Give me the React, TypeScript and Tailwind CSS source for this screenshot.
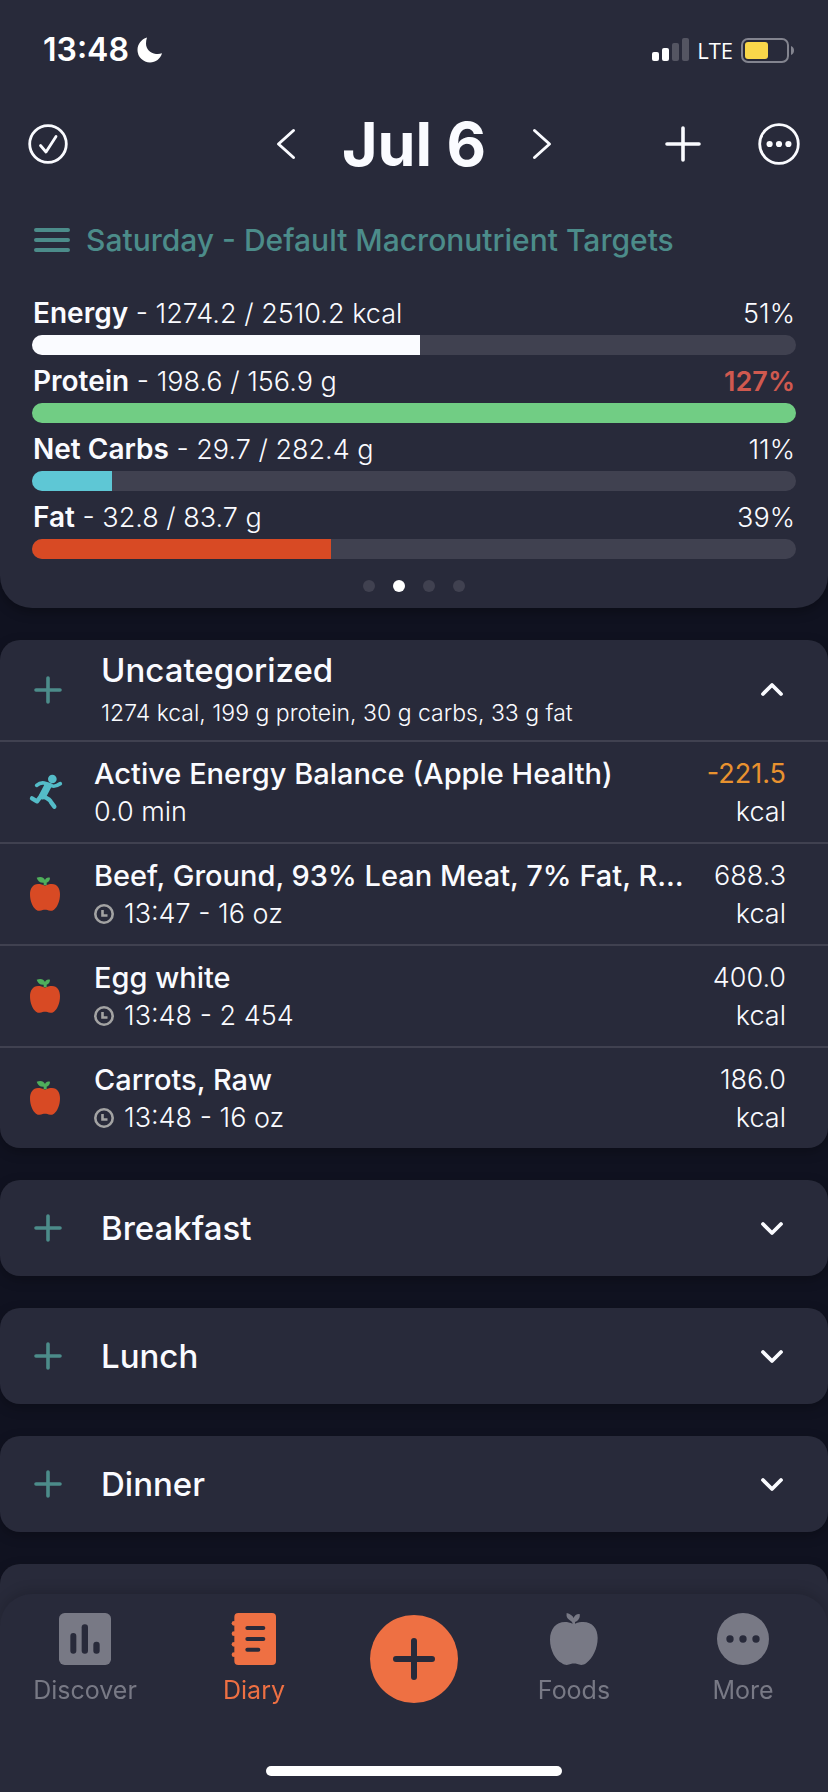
import React from "react";

type Macro = {
  name: string;
  consumed: number;
  target: number;
  unit: string;
  fill: string;
};

type Entry = {
  title: string;
  detail: string;
  value: string;
  kind: "exercise" | "food";
};

const macros: Macro[] = [
  { name: "Energy", consumed: 1274.2, target: 2510.2, unit: "kcal", fill: "bg-[#fafbff]" },
  { name: "Protein", consumed: 198.6, target: 156.9, unit: "g", fill: "bg-[#71cd84]" },
  { name: "Net Carbs", consumed: 29.7, target: 282.4, unit: "g", fill: "bg-[#5ec7d5]" },
  { name: "Fat", consumed: 32.8, target: 83.7, unit: "g", fill: "bg-[#d84a24]" },
];

const entries: Entry[] = [
  { title: "Active Energy Balance (Apple Health)", detail: "0.0 min", value: "-221.5", kind: "exercise" },
  { title: "Beef, Ground, 93% Lean Meat, 7% Fat, R…", detail: "13:47 - 16 oz", value: "688.3", kind: "food" },
  { title: "Egg white", detail: "13:48 - 2 454", value: "400.0", kind: "food" },
  { title: "Carrots, Raw", detail: "13:48 - 16 oz", value: "186.0", kind: "food" },
];

function StatusBar() {
  return (
    <div className="flex h-[100px] items-center justify-between pr-[34px] pl-[43px]">
      <div className="flex items-center gap-2">
        <span className="text-[32px] leading-none font-semibold text-white">13:48</span>
        <svg width="26" height="26" viewBox="0 0 26 26" fill="#fff" aria-hidden="true">
          <path d="M10 .5C4.300 2.200.5 7.200.5 13A12.500 12.500 0 0 0 13 25.500c5.600 0 10.500-3.600 12-9.200-2 .7-4 .9-6 .6C13 16.200 9 12 9 6.500c0-2.100.3-4.100 1-6z" />
        </svg>
      </div>
      <div className="flex items-center gap-2">
        <svg width="37" height="24" viewBox="0 0 37 24" aria-hidden="true">
          <rect x="0" y="14" width="7" height="9" rx="2" fill="#fff" />
          <rect x="10" y="10" width="7" height="13" rx="2" fill="#fff" />
          <rect x="20" y="5" width="7" height="18" rx="2" fill="#545562" />
          <rect x="30" y="0" width="7" height="23" rx="2" fill="#545562" />
        </svg>
        <span className="font-['Open_Sans',sans-serif] text-[22px] leading-none font-medium text-white">LTE</span>
        <svg width="53" height="25" viewBox="0 0 53 25" aria-hidden="true">
          <rect x="1" y="1" width="46" height="23" rx="6" fill="none" stroke="#83848f" strokeWidth="2" />
          <rect x="4" y="4" width="23" height="17" rx="3" fill="#f9d74a" />
          <path d="M50 8c2 .8 3 2.500 3 4.500S52 16.200 50 17z" fill="#83848f" />
        </svg>
      </div>
    </div>
  );
}

function PlusIcon() {
  return (
    <svg width="28" height="28" viewBox="0 0 28 28" stroke="#4c8c8a" strokeWidth="3.600" strokeLinecap="round" aria-hidden="true">
      <path d="M14 2v24M2 14h24" />
    </svg>
  );
}

function Caret({ up = false }: { up?: boolean }) {
  return (
    <svg width="24" height="16" viewBox="0 0 24 16" fill="none" stroke="#fafbff" strokeWidth="3.800" strokeLinecap="round" strokeLinejoin="round" aria-hidden="true">
      <path d={up ? "M3 12l9-9 9 9" : "M3 4l9 9 9-9"} />
    </svg>
  );
}

function RunnerIcon() {
  return (
    <svg width="34" height="36" viewBox="84 462 102 108" fill="none" stroke="#54bcc8" strokeLinecap="round" strokeLinejoin="round" aria-hidden="true">
      <circle cx="154" cy="477" r="13" fill="#54bcc8" stroke="none" />
      <path d="M107 496c7-6 14-8 22-7l20 6c6 6 15 5 29-4" strokeWidth="11" />
      <path d="M140 499l-15 28" strokeWidth="22" />
      <path d="M121 527l-13 17-15-9" strokeWidth="13" />
      <path d="M128 530c14 5 20 10 23 18l9 12" strokeWidth="13" />
    </svg>
  );
}

function AppleIcon() {
  return (
    <svg width="32" height="36" viewBox="87 768 96 108" aria-hidden="true">
      <path
        d="M135 797c7-3 13-5 21-5 16 0 24 13 24 31 0 20-8 39-18 46-7 5-15 4-20 1-5-1-9-1-14 0-5 3-13 4-20-1-10-7-18-26-18-46 0-18 9-31 24-31 8 0 14 2 21 5z"
        fill="#d84a24"
      />
      <path
        d="M131 796v-8c-10 1-18-5-21-15 12-4 21-2 25 7 2-7 8-9 15-7 0 8-4 13-10 15v8z"
        fill="#4fae5b"
      />
    </svg>
  );
}

function ClockIcon() {
  return (
    <svg width="20" height="20" viewBox="0 0 20 20" fill="none" stroke="#a3a3a3" aria-hidden="true">
      <circle cx="10" cy="10" r="8.700" strokeWidth="2.600" />
      <path d="M8.500 6v5.500H13.500" strokeWidth="2.600" />
    </svg>
  );
}

function MacroRow({ macro }: { macro: Macro }) {
  const share = (macro.consumed / macro.target) * 100;
  const over = share > 100;
  return (
    <div className="pt-[6px]">
      <div className="flex h-[42px] justify-between px-px text-[27px] leading-[42px] font-light">
        <span>
          <strong className="text-[28px] leading-none font-semibold">{macro.name}</strong> - {macro.consumed} / {macro.target} {macro.unit}
        </span>
        <span className={over ? "font-semibold text-[#d0594f]" : ""}>{Math.round(share)}%</span>
      </div>
      <div className="h-5 overflow-hidden rounded-full bg-[#404150]">
        <div className={`h-full ${macro.fill}`} style={{ width: `${Math.min(share, 100)}%` }} />
      </div>
    </div>
  );
}

function EntryRow({ entry }: { entry: Entry }) {
  const exercise = entry.kind === "exercise";
  return (
    <li className="flex items-center border-t-2 border-[#404150] pr-[42px] text-[27px] leading-[38px] font-light">
      <div className="flex w-[94px] shrink-0 pl-[29px]">{exercise ? <RunnerIcon /> : <AppleIcon />}</div>
      <div className="min-w-0 flex-1 pt-[13px] pb-[11px]">
        <div className="truncate text-[29px] font-medium">{entry.title}</div>
        <div className="flex items-center gap-[10px]">
          {!exercise && <ClockIcon />}
          <span>{entry.detail}</span>
        </div>
      </div>
      <div className="ml-4 min-w-[80px] shrink-0 pt-[13px] pb-[11px] text-right">
        <div className={exercise ? "font-normal text-[#e8922f]" : ""}>{entry.value}</div>
        <div>kcal</div>
      </div>
    </li>
  );
}

function MealCard({ name }: { name: string }) {
  return (
    <section className="flex h-24 items-center rounded-[20px] bg-[#282a3a] pr-11 pl-[34px] shadow-[0_4px_12px_rgba(0,0,0,0.25)]">
      <button type="button" aria-label={`Add to ${name}`}>
        <PlusIcon />
      </button>
      <h2 className="flex-1 pl-[39px] text-[33px] leading-10 font-medium">{name}</h2>
      <button type="button" aria-label={`Expand ${name}`}>
        <Caret />
      </button>
    </section>
  );
}

function NavItem({ label, active = false, children }: { label: string; active?: boolean; children: React.ReactNode }) {
  return (
    <a href="#" className={`flex flex-col items-center ${active ? "text-[#ee7043]" : "text-[#787985]"}`}>
      <svg width="54" height="54" viewBox="0 0 162 162" fill="currentColor" aria-hidden="true">
        {children}
      </svg>
      <span className="mt-2 text-[25px] leading-8">{label}</span>
    </a>
  );
}

function BottomNav() {
  return (
    <nav className="fixed inset-x-0 bottom-0 flex flex-col items-center rounded-t-[32px] bg-[#282a3a] pt-[18px] pb-4 shadow-[0_-4px_12px_rgba(0,0,0,0.15)]">
      <div className="grid w-full grid-cols-[170fr_168fr_152fr_168fr_170fr] items-center">
        <NavItem label="Discover">
          <rect x="3" y="3" width="156" height="156" rx="17" />
          <g fill="#282a3a">
            <rect x="37" y="63" width="18" height="62" rx="9" />
            <rect x="71" y="37" width="19" height="88" rx="9" />
            <rect x="106" y="89" width="19" height="36" rx="9" />
          </g>
        </NavItem>
        <NavItem label="Diary" active>
          <rect x="22" y="3" width="125" height="156" rx="12" />
          <circle cx="21" cy="34" r="7" />
          <circle cx="21" cy="65" r="7" />
          <circle cx="21" cy="97" r="7" />
          <circle cx="21" cy="128" r="7" />
          <g fill="#282a3a">
            <rect x="55" y="42" width="60" height="12" rx="6" />
            <rect x="55" y="75" width="60" height="12" rx="6" />
            <rect x="55" y="107" width="45" height="12" rx="6" />
          </g>
        </NavItem>
        <button type="button" aria-label="Add" className="grid size-[88px] place-items-center justify-self-center rounded-full bg-[#ee7043]">
          <svg width="42" height="42" viewBox="0 0 42 42" stroke="#282a3a" strokeWidth="6" strokeLinecap="round" aria-hidden="true">
            <path d="M21 3v36M3 21h36" />
          </svg>
        </button>
        <NavItem label="Foods">
          <path d="M77 35c-2-12-22-10-18-32 10 3 18 8 21 15 3-9 10-13 18-12 2 11-3 20-14 24v5c10-4 17-5 25-5 27 0 43 20 43 48 0 32-16 62-34 75-10 8-20 6-27 3-7-2-13-2-20 0-7 3-17 5-27-3C26 145 9 115 9 83c0-32 18-53 45-53 8 0 15 2 23 5z" />
        </NavItem>
        <NavItem label="More">
          <circle cx="81" cy="81" r="78" />
          <g fill="#282a3a">
            <circle cx="42" cy="81" r="11" />
            <circle cx="81" cy="81" r="11" />
            <circle cx="120" cy="81" r="11" />
          </g>
        </NavItem>
      </div>
      <div className="mt-[60px] h-[10px] w-[296px] rounded-full bg-white" />
    </nav>
  );
}

export default function App() {
  return (
    <div className="min-h-screen bg-[#101220] font-['Inter','Liberation_Sans',sans-serif] text-[#fafbff]">
      <header className="rounded-b-[32px] bg-[#282a3a] pb-4 shadow-[0_4px_12px_rgba(0,0,0,0.3)]">
        <StatusBar />
        <div className="grid h-[88px] grid-cols-[1fr_auto_1fr] items-center px-[28px]">
          <button type="button" aria-label="Mark day complete" className="justify-self-start">
            <svg width="40" height="40" viewBox="0 0 40 40" fill="none" stroke="#fafbff" strokeLinecap="round" strokeLinejoin="round" aria-hidden="true">
              <circle cx="20" cy="20" r="18.300" strokeWidth="2.800" />
              <path d="M12.500 21.500l5.500 6.500 10-15.500" strokeWidth="2.800" />
            </svg>
          </button>
          <div className="flex items-center gap-[41px]">
            <button type="button" aria-label="Previous day">
              <svg width="20" height="32" viewBox="0 0 20 32" fill="none" stroke="#fafbff" strokeWidth="3" strokeLinecap="round" strokeLinejoin="round" aria-hidden="true">
                <path d="M17.500 2.500L2.500 16l15 13.500" />
              </svg>
            </button>
            <h1 className="min-w-[154px] text-center text-[61px] leading-[72px] font-bold">Jul 6</h1>
            <button type="button" aria-label="Next day">
              <svg width="20" height="32" viewBox="0 0 20 32" fill="none" stroke="#fafbff" strokeWidth="3" strokeLinecap="round" strokeLinejoin="round" aria-hidden="true">
                <path d="M2.500 2.500L17.500 16l-15 13.500" />
              </svg>
            </button>
          </div>
          <div className="flex items-center gap-[57px] justify-self-end">
            <button type="button" aria-label="Add entry">
              <svg width="36" height="36" viewBox="0 0 36 36" stroke="#fafbff" strokeWidth="3.600" strokeLinecap="round" aria-hidden="true">
                <path d="M18 2v32M2 18h32" />
              </svg>
            </button>
            <button type="button" aria-label="More options">
              <svg width="42" height="42" viewBox="0 0 42 42" fill="#fafbff" aria-hidden="true">
                <circle cx="21" cy="21" r="19.300" fill="none" stroke="#fafbff" strokeWidth="2.800" />
                <circle cx="11.600" cy="21" r="3.100" />
                <circle cx="21" cy="21" r="3.100" />
                <circle cx="30.400" cy="21" r="3.100" />
              </svg>
            </button>
          </div>
        </div>
        <a href="#" className="mt-1 flex h-[95px] items-center gap-4 px-[34px] text-[30px] leading-[38px] font-medium text-[#4c8c8a]">
          <svg width="36" height="24" viewBox="0 0 36 24" stroke="#4c8c8a" strokeWidth="4" strokeLinecap="round" aria-hidden="true">
            <path d="M2 2h32M2 12h32M2 22h32" />
          </svg>
          Saturday - Default Macronutrient Targets
        </a>
        <div className="px-8">
          {macros.map((macro) => (
            <MacroRow key={macro.name} macro={macro} />
          ))}
        </div>
        <div className="mt-[21px] flex justify-center gap-[18px]">
          <span className="size-3 rounded-full bg-[#404150]" />
          <span className="size-3 rounded-full bg-white" />
          <span className="size-3 rounded-full bg-[#404150]" />
          <span className="size-3 rounded-full bg-[#404150]" />
        </div>
      </header>

      <main className="flex flex-col gap-8 pt-8 pb-24">
        <section className="rounded-[20px] bg-[#282a3a] shadow-[0_4px_12px_rgba(0,0,0,0.25)]">
          <div className="flex items-center pr-11 pl-[34px]">
            <button type="button" aria-label="Add to Uncategorized">
              <PlusIcon />
            </button>
            <div className="flex-1 pt-[10px] pb-2 pl-[39px]">
              <h2 className="text-[33px] leading-10 font-medium">Uncategorized</h2>
              <p className="mt-1 text-[23px] leading-[38px] font-light">1274 kcal, 199 g protein, 30 g carbs, 33 g fat</p>
            </div>
            <button type="button" aria-label="Collapse Uncategorized">
              <Caret up />
            </button>
          </div>
          <ul>
            {entries.map((entry) => (
              <EntryRow key={entry.title} entry={entry} />
            ))}
          </ul>
        </section>
        <MealCard name="Breakfast" />
        <MealCard name="Lunch" />
        <MealCard name="Dinner" />
        <MealCard name="Snacks" />
      </main>
      <BottomNav />
    </div>
  );
}
